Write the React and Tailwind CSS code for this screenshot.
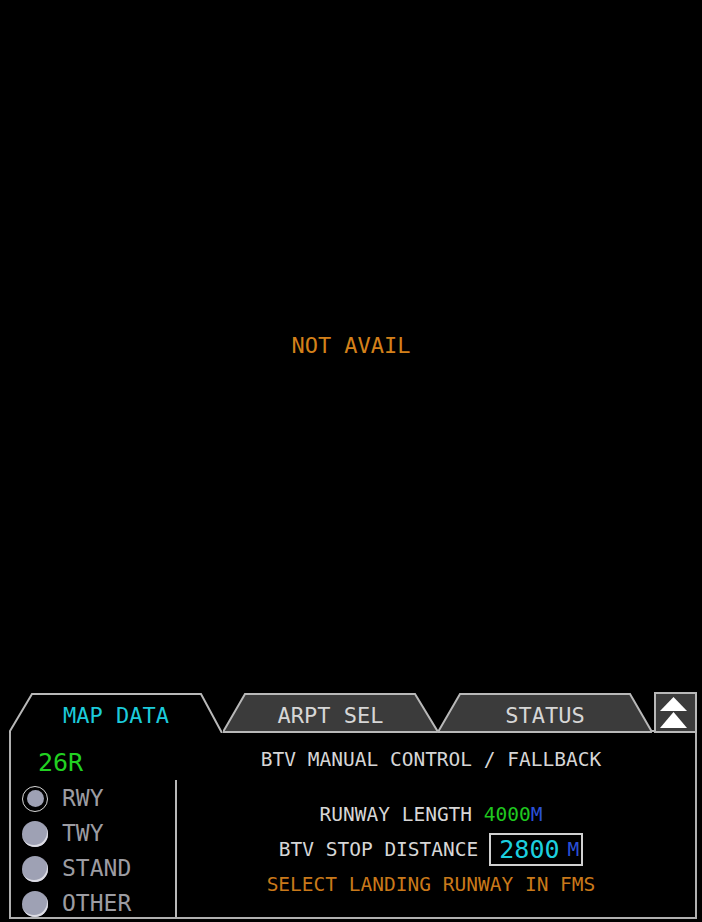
import React from "react";

const line = "#b8b8b8";

function Tab({ width, active, label, points }) {
  return (
    <div className={`relative shrink-0 h-[41px] ${width} flex items-center justify-center pt-[6px]`}>
      <svg className="absolute inset-0" width="100%" height="100%" preserveAspectRatio="none">
        {active ? (
          <path d={points} fill="#000" stroke={line} strokeWidth="2" />
        ) : (
          <polygon points={points} fill="#3b3b3b" stroke={line} strokeWidth="2" />
        )}
      </svg>
      <span
        className={`relative text-[22px] leading-none ${active ? "text-[#1ccbdb]" : "text-[#d6d6d6]"}`}
      >
        {label}
      </span>
    </div>
  );
}

function Radio({ label, selected }) {
  return (
    <div className="flex items-center h-[35px] pl-[11px] gap-[14px]">
      {selected ? (
        <div className="w-[26px] h-[26px] rounded-full border-[1.5px] border-[#d8d8d8] flex items-center justify-center">
          <div className="w-[17px] h-[17px] rounded-full bg-[#9ea1b4]" />
        </div>
      ) : (
        <div className="w-[26px] h-[26px] rounded-full bg-[#9ea1b4] shadow-[inset_-1px_-2px_0_#dcdce4]" />
      )}
      <span className="text-[23px] leading-none text-[#9c9ca2]">{label}</span>
    </div>
  );
}

export default function App() {
  return (
    <div className="w-[702px] h-[922px] bg-black flex flex-col font-['DejaVu_Sans_Mono',monospace] overflow-hidden">
      {/* map area */}
      <div className="flex-1 flex items-center justify-center">
        <span className="text-[22px] leading-none text-[#d4801a]">NOT AVAIL</span>
      </div>

      {/* tabs */}
      <div className="flex items-end h-[41px] shrink-0">
        <div className="w-[9px] shrink-0" />
        <Tab width="w-[214px]" active label="MAP DATA" points="M1 41 L1 39 L23 2 L192 2 L213 41" />
        <Tab width="w-[215px]" label="ARPT SEL" points="0,40 22,2 192,2 215,40" />
        <Tab width="w-[214px]" label="STATUS" points="0,40 22,2 192,2 214,40" />
        <div className="w-[2px] h-[2px] mb-[1px] bg-[#b8b8b8] shrink-0" />
        <button className="w-[43px] h-[41px] shrink-0 border-2 border-[#b8b8b8] bg-[#3b3b3b] flex items-center justify-center p-0">
          <svg width="39" height="37" viewBox="0 0 39 37">
            <polygon points="17.5,3 31,17 4,17" fill="#fff" />
            <polygon points="17.5,18 31,34 4,34" fill="#fff" />
          </svg>
        </button>
      </div>

      {/* panel body */}
      <div className="ml-[9px] mr-[5px] h-[186px] shrink-0 border-x-2 border-b-2 border-[#b0b0b0] flex">
        <div className="w-[166px] shrink-0 flex flex-col">
          <div className="h-[47px] pt-[17px] pl-[27px]">
            <span className="text-[25px] leading-none text-[#22d122]">26R</span>
          </div>
          <div className="flex-1 min-h-0 border-r-2 border-[#b8b8b8] pt-[1px]">
            <Radio label="RWY" selected />
            <Radio label="TWY" />
            <Radio label="STAND" />
            <Radio label="OTHER" />
          </div>
        </div>

        <div className="flex-1 flex flex-col items-center pt-[17px] pr-[10px] text-[19.5px] leading-none text-[#d6d6d6]">
          <div>BTV MANUAL CONTROL / FALLBACK</div>
          <div className="mt-[27.5px] h-[35px] flex items-center">
            <span>RUNWAY LENGTH</span>
            <span className="ml-[11.7px] text-[#1fc81f]">4000</span>
            <span className="text-[#2a50d8]">M</span>
          </div>
          <div className="h-[35px] flex items-center">
            <span>BTV STOP DISTANCE</span>
            <div className="ml-[11px] h-[33px] border-2 border-[#d0d0d0] flex items-center pl-[8px] pr-[2px]">
              <span className="text-[25px] text-[#1ccfdf]">2800</span>
              <span className="ml-[8px] text-[#2a50d8]">M</span>
            </div>
          </div>
          <div className="h-[35px] flex items-center text-[#c9791a]">SELECT LANDING RUNWAY IN FMS</div>
        </div>
      </div>
      <div className="h-[3px] shrink-0" />
    </div>
  );
}
